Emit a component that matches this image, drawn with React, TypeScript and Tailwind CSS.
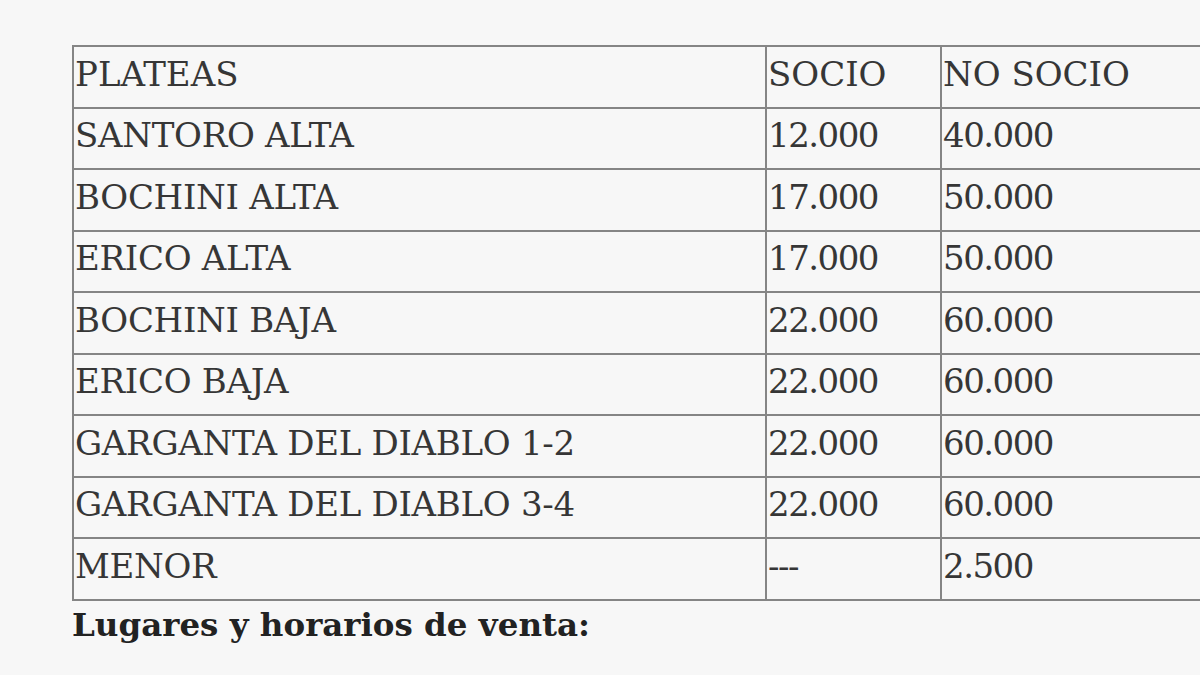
const rows: [string, string, string][] = [
  ['SANTORO ALTA', '12.000', '40.000'],
  ['BOCHINI ALTA', '17.000', '50.000'],
  ['ERICO ALTA', '17.000', '50.000'],
  ['BOCHINI BAJA', '22.000', '60.000'],
  ['ERICO BAJA', '22.000', '60.000'],
  ['GARGANTA DEL DIABLO 1-2', '22.000', '60.000'],
  ['GARGANTA DEL DIABLO 3-4', '22.000', '60.000'],
  ['MENOR', '---', '2.500'],
]

const cell = 'border-2 border-[#858585] h-[61.5px] px-[1px] pb-[6px] align-middle text-left font-normal'
const num = cell + ' tracking-[-1.5px]'

export default function App() {
  return (
    <div className="w-[1200px] h-[675px] overflow-hidden bg-[#f7f7f7] text-[#363636] font-['DejaVu_Serif',serif]">
      <div className="pt-[45px] pl-[72px]">
        <table className="table-fixed border-collapse w-[1180px] text-[34px] leading-none">
          <colgroup>
            <col className="w-[693px]" />
            <col className="w-[175px]" />
            <col />
          </colgroup>
          <thead>
            <tr>
              <th className={cell}>PLATEAS</th>
              <th className={cell}>SOCIO</th>
              <th className={cell}>NO SOCIO</th>
            </tr>
          </thead>
          <tbody>
            {rows.map(r => (
              <tr key={r[0]}>
                <td className={cell + ' tracking-[-0.3px]'}>{r[0]}</td>
                <td className={num}>{r[1]}</td>
                <td className={num}>{r[2]}</td>
              </tr>
            ))}
          </tbody>
        </table>
        <p className="mt-[4px] text-[32.5px] font-bold leading-tight text-[#222]">Lugares y horarios de venta:</p>
      </div>
    </div>
  )
}
